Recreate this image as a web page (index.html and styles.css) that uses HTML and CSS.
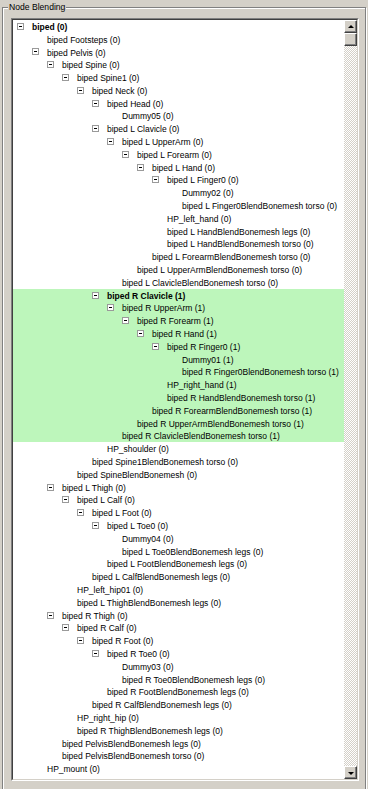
FILE: index.html
```html
<!DOCTYPE html>
<html>
<head>
<meta charset="utf-8">
<link rel="stylesheet" href="styles.css">
</head>
<body>
<fieldset class="group">
  <legend class="group-title">Node Blending</legend>
  <div class="listbox">
    <div class="listbox-inner">
      <div class="tree">
        <div class="row node bold d0"><span class="exp"></span><span class="txt">biped (0)</span></div>
        <div class="row leaf d1"><span class="txt">biped Footsteps (0)</span></div>
        <div class="row node d1"><span class="exp"></span><span class="txt">biped Pelvis (0)</span></div>
        <div class="row node d2"><span class="exp"></span><span class="txt">biped Spine (0)</span></div>
        <div class="row node d3"><span class="exp"></span><span class="txt">biped Spine1 (0)</span></div>
        <div class="row node d4"><span class="exp"></span><span class="txt">biped Neck (0)</span></div>
        <div class="row node d5"><span class="exp"></span><span class="txt">biped Head (0)</span></div>
        <div class="row leaf d6"><span class="txt">Dummy05 (0)</span></div>
        <div class="row node d5"><span class="exp"></span><span class="txt">biped L Clavicle (0)</span></div>
        <div class="row node d6"><span class="exp"></span><span class="txt">biped L UpperArm (0)</span></div>
        <div class="row node d7"><span class="exp"></span><span class="txt">biped L Forearm (0)</span></div>
        <div class="row node d8"><span class="exp"></span><span class="txt">biped L Hand (0)</span></div>
        <div class="row node d9"><span class="exp"></span><span class="txt">biped L Finger0 (0)</span></div>
        <div class="row leaf d10"><span class="txt">Dummy02 (0)</span></div>
        <div class="row leaf d10"><span class="txt">biped L Finger0BlendBonemesh torso (0)</span></div>
        <div class="row leaf d9"><span class="txt">HP_left_hand (0)</span></div>
        <div class="row leaf d9"><span class="txt">biped L HandBlendBonemesh legs (0)</span></div>
        <div class="row leaf d9"><span class="txt">biped L HandBlendBonemesh torso (0)</span></div>
        <div class="row leaf d8"><span class="txt">biped L ForearmBlendBonemesh torso (0)</span></div>
        <div class="row leaf d7"><span class="txt">biped L UpperArmBlendBonemesh torso (0)</span></div>
        <div class="row leaf d6"><span class="txt">biped L ClavicleBlendBonemesh torso (0)</span></div>
        <div class="row node bold sel d5"><span class="exp"></span><span class="txt">biped R Clavicle (1)</span></div>
        <div class="row node sel d6"><span class="exp"></span><span class="txt">biped R UpperArm (1)</span></div>
        <div class="row node sel d7"><span class="exp"></span><span class="txt">biped R Forearm (1)</span></div>
        <div class="row node sel d8"><span class="exp"></span><span class="txt">biped R Hand (1)</span></div>
        <div class="row node sel d9"><span class="exp"></span><span class="txt">biped R Finger0 (1)</span></div>
        <div class="row leaf sel d10"><span class="txt">Dummy01 (1)</span></div>
        <div class="row leaf sel d10"><span class="txt">biped R Finger0BlendBonemesh torso (1)</span></div>
        <div class="row leaf sel d9"><span class="txt">HP_right_hand (1)</span></div>
        <div class="row leaf sel d9"><span class="txt">biped R HandBlendBonemesh torso (1)</span></div>
        <div class="row leaf sel d8"><span class="txt">biped R ForearmBlendBonemesh torso (1)</span></div>
        <div class="row leaf sel d7"><span class="txt">biped R UpperArmBlendBonemesh torso (1)</span></div>
        <div class="row leaf sel d6"><span class="txt">biped R ClavicleBlendBonemesh torso (1)</span></div>
        <div class="row leaf d5"><span class="txt">HP_shoulder (0)</span></div>
        <div class="row leaf d4"><span class="txt">biped Spine1BlendBonemesh torso (0)</span></div>
        <div class="row leaf d3"><span class="txt">biped SpineBlendBonemesh (0)</span></div>
        <div class="row node d2"><span class="exp"></span><span class="txt">biped L Thigh (0)</span></div>
        <div class="row node d3"><span class="exp"></span><span class="txt">biped L Calf (0)</span></div>
        <div class="row node d4"><span class="exp"></span><span class="txt">biped L Foot (0)</span></div>
        <div class="row node d5"><span class="exp"></span><span class="txt">biped L Toe0 (0)</span></div>
        <div class="row leaf d6"><span class="txt">Dummy04 (0)</span></div>
        <div class="row leaf d6"><span class="txt">biped L Toe0BlendBonemesh legs (0)</span></div>
        <div class="row leaf d5"><span class="txt">biped L FootBlendBonemesh legs (0)</span></div>
        <div class="row leaf d4"><span class="txt">biped L CalfBlendBonemesh legs (0)</span></div>
        <div class="row leaf d3"><span class="txt">HP_left_hip01 (0)</span></div>
        <div class="row leaf d3"><span class="txt">biped L ThighBlendBonemesh legs (0)</span></div>
        <div class="row node d2"><span class="exp"></span><span class="txt">biped R Thigh (0)</span></div>
        <div class="row node d3"><span class="exp"></span><span class="txt">biped R Calf (0)</span></div>
        <div class="row node d4"><span class="exp"></span><span class="txt">biped R Foot (0)</span></div>
        <div class="row node d5"><span class="exp"></span><span class="txt">biped R Toe0 (0)</span></div>
        <div class="row leaf d6"><span class="txt">Dummy03 (0)</span></div>
        <div class="row leaf d6"><span class="txt">biped R Toe0BlendBonemesh legs (0)</span></div>
        <div class="row leaf d5"><span class="txt">biped R FootBlendBonemesh legs (0)</span></div>
        <div class="row leaf d4"><span class="txt">biped R CalfBlendBonemesh legs (0)</span></div>
        <div class="row leaf d3"><span class="txt">HP_right_hip (0)</span></div>
        <div class="row leaf d3"><span class="txt">biped R ThighBlendBonemesh legs (0)</span></div>
        <div class="row leaf d2"><span class="txt">biped PelvisBlendBonemesh legs (0)</span></div>
        <div class="row leaf d2"><span class="txt">biped PelvisBlendBonemesh torso (0)</span></div>
        <div class="row leaf d1"><span class="txt">HP_mount (0)</span></div>
      </div>
      <div class="vscroll">
        <div class="sbtn"><span class="arrow up"></span></div>
        <div class="sthumb"></div>
        <div class="strack"></div>
        <div class="sbtn"><span class="arrow down"></span></div>
      </div>
    </div>
  </div>
</fieldset>
</body>
</html>
```
FILE: styles.css
```css
html, body {
  margin: 0;
  padding: 0;
  height: 789px;
  overflow: hidden;
  background: #d4d0c8;
  font-family: "Liberation Sans", Arial, sans-serif;
  font-size: 8.5px;
  color: #000;
}

.group {
  margin: 1px 2px 0 2px;
  padding: 4px 6px 8px 8px;
  border: 1px solid #808080;
  box-shadow: 1px 1px 0 #fff, inset 1px 1px 0 #fff;
  min-width: 0;
}

.group-title {
  margin-left: -3px;
  padding: 0 1px;
  line-height: 13px;
  background: #d4d0c8;
  font-size: 8.6px;
}

.listbox {
  height: 763px;
  box-sizing: border-box;
  border: 1px solid;
  border-color: #808080 #fff #fff #808080;
}

.listbox-inner {
  height: 100%;
  box-sizing: border-box;
  border: 1px solid;
  border-color: #404040 #d4d0c8 #d4d0c8 #404040;
  display: flex;
  background: #fff;
}

.tree {
  flex: 1;
  min-width: 0;
  overflow: hidden;
  background: #fff;
}

.row {
  height: 12.8px;
  display: flex;
  align-items: center;
  white-space: nowrap;
  --d: 0;
}

.row.node { padding-left: calc(4px + var(--d) * 15px); }
.row.leaf { padding-left: calc(19px + var(--d) * 15px); }

.d0 { --d: 0; }
.d1 { --d: 1; }
.d2 { --d: 2; }
.d3 { --d: 3; }
.d4 { --d: 4; }
.d5 { --d: 5; }
.d6 { --d: 6; }
.d7 { --d: 7; }
.d8 { --d: 8; }
.d9 { --d: 9; }
.d10 { --d: 10; }

.row.sel { background: #bdf6bb; }
.row.bold .txt { font-weight: bold; }

.txt {
  line-height: 12px;
  padding-top: 1px;
}

.exp {
  flex: none;
  width: 7px;
  height: 7px;
  box-sizing: border-box;
  border: 1px solid #9a9a9a;
  background: #fff;
  margin-right: 8px;
  position: relative;
}

.exp::after {
  content: "";
  position: absolute;
  left: 1px;
  top: 2px;
  width: 3px;
  height: 1px;
  background: #000;
}

.vscroll {
  flex: none;
  width: 13px;
  display: flex;
  flex-direction: column;
}

.sbtn, .sthumb {
  flex: none;
  height: 13px;
  box-sizing: border-box;
  background: #d4d0c8;
  border: 1px solid;
  border-color: #fff #404040 #404040 #fff;
  box-shadow: inset -1px -1px 0 #808080;
  display: flex;
  align-items: center;
  justify-content: center;
}

.strack {
  flex: 1;
  background: repeating-conic-gradient(#d4d0c8 0 25%, #fff 0 50%) 0 0 / 2px 2px;
}

.arrow {
  width: 0;
  height: 0;
  border-left: 3px solid transparent;
  border-right: 3px solid transparent;
}

.arrow.up { border-bottom: 3px solid #000; margin-top: -1px; }
.arrow.down { border-top: 3px solid #000; margin-top: 1px; }
```
